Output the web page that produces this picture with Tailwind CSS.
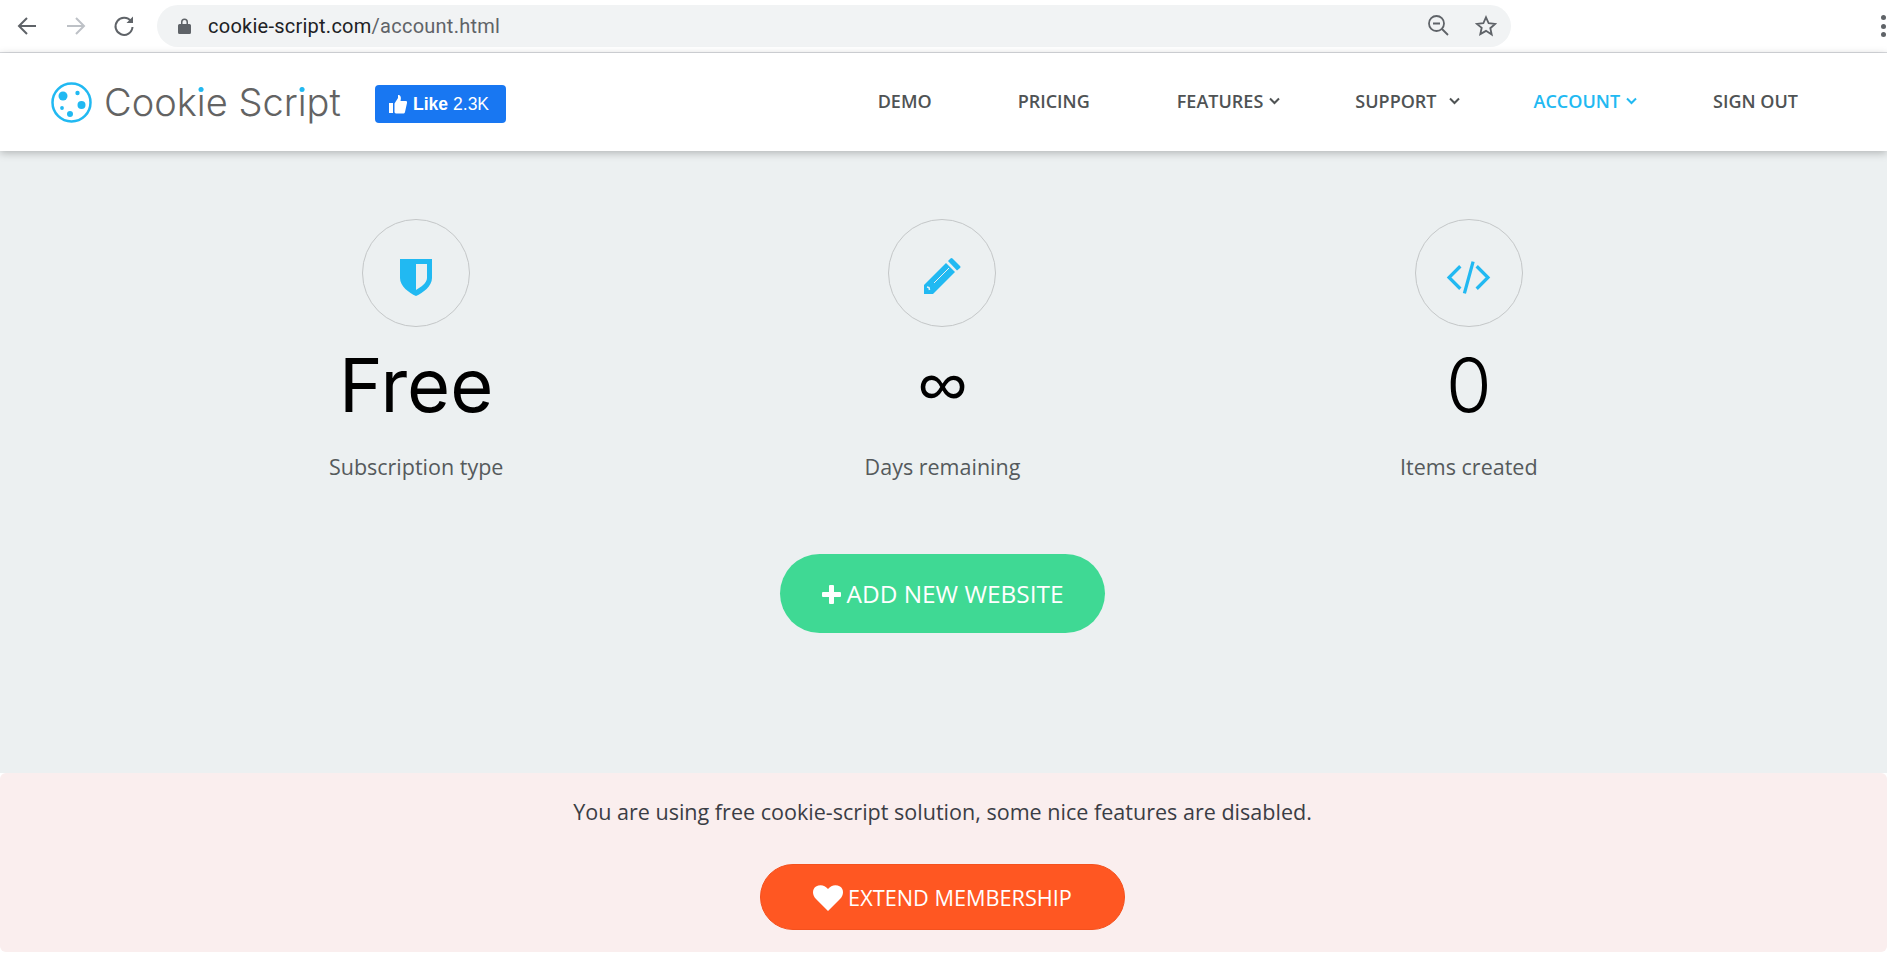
<!DOCTYPE html>
<html lang="en">
<head>
  <meta charset="UTF-8" />
  <title>Account | Cookie Script</title>
  <script src="https://cdn.jsdelivr.net/npm/@tailwindcss/browser@4"></script>
</head>
<body class="bg-white font-['Open_Sans',sans-serif] h-[961px] overflow-hidden">
  <!-- browser toolbar -->
  <div class="h-[53px] flex items-center border-b border-[#dadce0] relative pl-[17px]">
    <svg class="w-[20px] h-[20px] mr-[29px]" viewBox="0 0 20 20" fill="none" stroke="#5f6368" stroke-width="2"><path d="M19 10H2M10 2l-8 8 8 8"/></svg>
    <svg class="w-[20px] h-[20px] mr-[27px]" viewBox="0 0 20 20" fill="none" stroke="#bdc1c6" stroke-width="2"><path d="M1 10h17M10 2l8 8-8 8"/></svg>
    <svg class="w-[22px] h-[22px] mr-[22px]" viewBox="0 0 22 22" fill="none" stroke="#5f6368" stroke-width="2"><path d="M18 6.500A8.500 8.500 0 1 0 19.500 12"/><path d="M20 1.500V8h-6.500z" fill="#5f6368" stroke="none"/></svg>
    <div class="w-[1354px] h-[42px] mb-[1px] rounded-full bg-[#f1f3f4] flex items-center pl-[21px] pr-[11px]">
      <svg class="w-[13px] h-[16px] mr-[17px]" viewBox="0 0 13 16" fill="#5f6368"><path d="M1.500 6H3V4a3.500 3.500 0 0 1 7 0v2h1.500A1.500 1.500 0 0 1 13 7.500v7a1.500 1.500 0 0 1-1.500 1.500h-10A1.500 1.500 0 0 1 0 14.500v-7A1.500 1.500 0 0 1 1.500 6zM4.500 6h4V4a2 2 0 0 0-4 0z"/></svg>
      <span class="text-[20px] font-['Roboto',sans-serif] text-[#202124] tracking-[0.25px]">cookie-script.com<span class="text-[#5f6368]">/account.html</span></span>
      <svg class="w-[21px] h-[21px] ml-auto mr-[26px]" viewBox="0 0 21 21" fill="none" stroke="#5f6368" stroke-width="1.800"><circle cx="8.500" cy="8.500" r="7.500"/><path d="M5 8.500h7M14 14l6 6"/></svg>
      <svg class="w-[22px] h-[22px] mr-[3px]" viewBox="0 0 24 24" fill="none" stroke="#5f6368" stroke-width="2"><path d="M12 2.500l2.900 6.500 7.100.700-5.300 4.700 1.500 7L12 17.300 5.800 20.900l1.500-7L2 9.700l7.100-.700z"/></svg>
    </div>
    <div class="absolute right-[1px] top-[15px] flex flex-col gap-[3.500px]">
      <div class="w-[5px] h-[5px] rounded-full bg-[#5f6368]"></div>
      <div class="w-[5px] h-[5px] rounded-full bg-[#5f6368]"></div>
      <div class="w-[5px] h-[5px] rounded-full bg-[#5f6368]"></div>
    </div>
  </div>

  <!-- site header -->
  <header class="h-[98px] bg-white shadow-[0_2px_8px_rgba(0,0,0,0.25)] flex items-center relative z-10 pl-[51px] pr-[89px]">
    <svg class="w-[41px] h-[41px] mr-[12px]" viewBox="0 0 41 41" fill="#21b9f2">
      <circle cx="20.500" cy="20.500" r="19" fill="none" stroke="#21b9f2" stroke-width="2.500"/>
      <circle cx="12" cy="14" r="4.500"/><circle cx="26.500" cy="11" r="2.200"/><circle cx="30.500" cy="23" r="4"/><circle cx="11" cy="26" r="1.900"/><circle cx="19" cy="32" r="3"/>
    </svg>
    <div class="text-[38px] leading-none mb-[1px] text-[#636363] font-['Inter',sans-serif] font-light w-[271px]">Cook<span class="relative">i<span class="absolute left-1/2 -translate-x-1/2 top-[8px] w-[5px] h-[5px] rounded-full bg-[#21b9f2]"></span></span>e Scr<span class="relative">i<span class="absolute left-1/2 -translate-x-1/2 top-[8px] w-[5px] h-[5px] rounded-full bg-[#21b9f2]"></span></span>pt</div>
    <div class="w-[131px] h-[38px] rounded-[4px] bg-[#1877f2] text-white flex items-center pl-[14px] font-['Liberation_Sans',sans-serif] text-[17.500px] mt-[4px]">
      <svg class="w-[18px] h-[20px] mr-[6px]" viewBox="0 0 18 20" fill="#fff"><path d="M0 9h4v10H0zM5.500 9.500 9 4V1c2.500-.5 3.500 2 2.500 6H17c1 0 1.300 1.200 1 2l-2 9c-.2 1-1 1.500-2 1.500H8c-1.200 0-2.500-.5-2.500-1.500z"/></svg>
      <span class="font-bold">Like</span><span class="ml-[5px]">2.3K</span>
    </div>
    <nav class="ml-auto mb-[2px] flex items-center gap-[74px] text-[18px] font-semibold text-[#4f5354]">
      <a class="mr-[12px]">DEMO</a>
      <a class="mr-[13px]">PRICING</a>
      <a class="flex items-center gap-[6px] mr-[1px]">FEATURES
        <svg class="w-[11px] h-[8px]" viewBox="0 0 11 8" fill="none" stroke="currentColor" stroke-width="2"><path d="M1 1.500l4.500 4.500L10 1.500"/></svg></a>
      <a class="flex items-center gap-[12px]">SUPPORT
        <svg class="w-[11px] h-[8px]" viewBox="0 0 11 8" fill="none" stroke="currentColor" stroke-width="2"><path d="M1 1.500l4.500 4.500L10 1.500"/></svg></a>
      <a class="flex items-center gap-[6px] mr-[2px] text-[#21b9f2]">ACCOUNT
        <svg class="w-[11px] h-[8px]" viewBox="0 0 11 8" fill="none" stroke="currentColor" stroke-width="2"><path d="M1 1.500l4.500 4.500L10 1.500"/></svg></a>
      <a>SIGN OUT</a>
    </nav>
  </header>

  <!-- stats -->
  <main class="h-[622px] bg-[#ecf0f1] pt-[68px]">
    <div class="w-[1885px]">
      <div class="ml-[153px] w-[1579px] grid grid-cols-3 text-center">
        <div class="flex flex-col items-center">
          <div class="w-[108px] h-[108px] rounded-full border border-[#c4c7c8] flex items-center justify-center">
            <svg class="w-[32px] h-[37px] mt-[8px]" viewBox="0 0 32 37" fill="#21b9f2"><path d="M0 0h32v19c0 8-9 15-16 18C9 34 0 27 0 19zM16 5v26c5-3 11-7 11-12V5z"/></svg>
          </div>
          <div class="text-[74px] leading-[100px] text-black mt-[8px] font-['Inter',sans-serif]">Free</div>
          <div class="text-[21.500px] leading-[28px] text-[#555a5c] mt-[18px]">Subscription type</div>
        </div>
        <div class="flex flex-col items-center">
          <div class="w-[108px] h-[108px] rounded-full border border-[#c4c7c8] flex items-center justify-center">
            <svg class="w-[37px] h-[36px] mt-[5px]" viewBox="0 0 37 36" fill="#21b9f2"><path d="M0 36v-9L22 5l9 9L9 36z"/><path d="M24 3l2.500-2.500q1-1 2 0L36 8q1 1 0 2l-3 2.500z"/><path d="M10 25 25 10" stroke="#ecf0f1" stroke-width="1" fill="none"/><path d="M3 29l2 .5.500 2.500" stroke="#ecf0f1" stroke-width="1.500" fill="none"/></svg>
          </div>
          <div class="text-[74px] leading-[100px] text-black mt-[8px]">∞</div>
          <div class="text-[21.500px] leading-[28px] text-[#555a5c] mt-[18px]">Days remaining</div>
        </div>
        <div class="flex flex-col items-center">
          <div class="w-[108px] h-[108px] rounded-full border border-[#c4c7c8] flex items-center justify-center">
            <svg class="w-[45px] h-[33px] mt-[9px]" viewBox="0 0 44 32" fill="none" stroke="#21b9f2" stroke-width="3.200"><path d="M14 5 3 16l11 11M30 5l11 11-11 11M26.500 0.500 18 31.500"/></svg>
          </div>
          <div class="text-[74px] leading-[100px] text-black mt-[8px] font-['Inter',sans-serif] font-light">0</div>
          <div class="text-[21.500px] leading-[28px] text-[#555a5c] mt-[18px]">Items created</div>
        </div>
      </div>
      <div class="flex justify-center mt-[73px]">
        <a class="w-[325px] h-[79px] pt-[2px] rounded-full bg-[#3fd994] text-white flex items-center justify-center text-[24.400px]">
          <svg class="w-[19px] h-[19px] mr-[6px]" viewBox="0 0 19 19" fill="#fff"><path d="M7 1q0-1 1-1h3q1 0 1 1v6h6q1 0 1 1v3q0 1-1 1h-6v6q0 1-1 1H8q-1 0-1-1v-6H1q-1 0-1-1V8q0-1 1-1h6z"/></svg>
          ADD NEW WEBSITE
        </a>
      </div>
    </div>
  </main>

  <!-- free plan notice -->
  <section class="h-[179px] bg-[#faeeee] rounded-[6px] pt-[22px]">
    <div class="w-[1885px] flex flex-col items-center">
      <p class="text-[21.550px] leading-[34px] text-[#3a3d45]">You are using free cookie-script solution, some nice features are disabled.</p>
      <a class="w-[365px] h-[66px] mt-[35px] pt-[2px] rounded-full border border-[#f4511e] bg-[#ff5722] text-white flex items-center justify-center text-[21.700px]">
        <svg class="w-[30px] h-[26px] mr-[5px]" viewBox="0 0 30 26" fill="#fff"><path d="M15 26 3 14C-1 10-1 4 3 1.500 7-1 12 0 15 4c3-4 8-5 12-2.500 4 2.500 4 8.500 0 12.500z"/></svg>
        EXTEND MEMBERSHIP
      </a>
    </div>
  </section>
</body>
</html>
